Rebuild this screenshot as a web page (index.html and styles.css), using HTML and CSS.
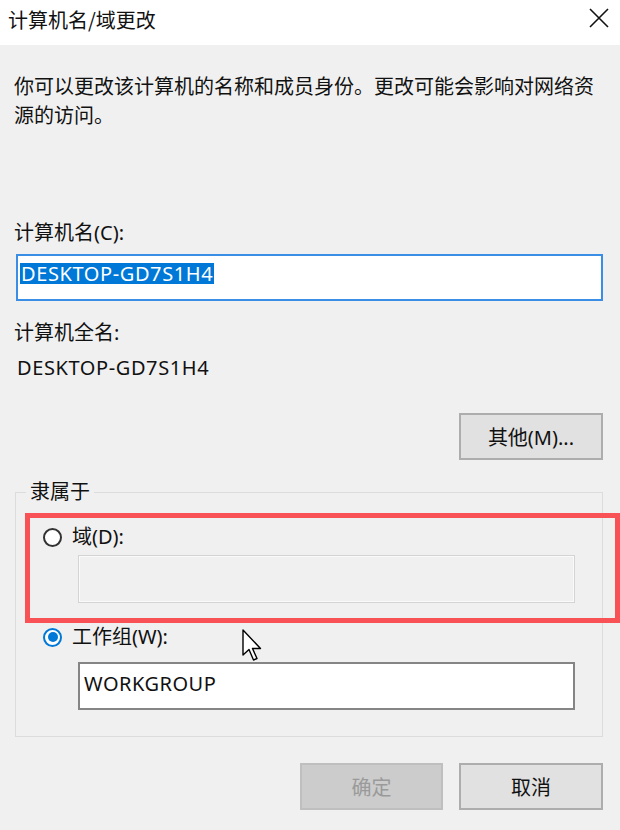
FILE: index.html
```html
<!DOCTYPE html>
<html lang="zh-CN">
<head>
  <meta charset="UTF-8">
  <title>计算机名/域更改</title>
  <link rel="stylesheet" href="styles.css">
</head>
<body>
  <div class="window">
    <!-- 标题栏 -->
    <div class="titlebar">
      <span class="title">计算机名/域更改</span>
      <svg class="close" width="20" height="20" viewBox="0 0 20 20">
        <path d="M1 1 L19 19 M19 1 L1 19" stroke="#111" stroke-width="1.6" fill="none"/>
      </svg>
    </div>

    <div class="content">
      <p class="desc">你可以更改该计算机的名称和成员身份。更改可能会影响对网络资源的访问。</p>

      <div class="field-label name-label">计算机名(C):</div>
      <div class="textbox focused"><span class="sel">DESKTOP-GD7S1H4</span></div>

      <div class="field-label full-label">计算机全名:</div>
      <div class="value">DESKTOP-GD7S1H4</div>

      <div class="row-right">
        <button class="btn">其他(M)...</button>
      </div>

      <fieldset class="group">
        <legend>隶属于</legend>
        <div class="option domain-opt"><span class="radio"></span>域(D):</div>
        <div class="textbox inset disabled"></div>
        <div class="option wg-opt"><span class="radio checked"></span>工作组(W):</div>
        <div class="textbox inset wg">WORKGROUP</div>
      </fieldset>

      <div class="actions">
        <button class="btn" disabled>确定</button>
        <button class="btn">取消</button>
      </div>
    </div>

    <!-- 红框标注 -->
    <div class="mark"></div>

    <!-- 鼠标指针 -->
    <svg class="cursor" width="22" height="34" viewBox="0 0 22 34">
      <path d="M1 1 L1 26 L7 20.5 L11.5 31 L15 29.5 L10.5 19.5 L18.5 19.5 Z" fill="#fff" stroke="#000" stroke-width="1.4" stroke-linejoin="round"/>
    </svg>
  </div>
</body>
</html>
```

FILE: styles.css
```css
* {
  box-sizing: border-box;
}
body {
  margin: 0;
  background: #f0f0f0;
  font-family: "Noto Sans", "Noto Sans CJK SC", sans-serif;
  font-size: 20px;
  color: #111;
}
.window {
  position: relative;
  width: 620px;
  height: 830px;
  overflow: hidden;
  background: #f0f0f0;
}

/* 标题栏 */
.titlebar {
  height: 45px;
  background: #fff;
  display: flex;
  justify-content: space-between;
  align-items: flex-start;
  padding: 6px 11px 0 8px;
}
.title {
  line-height: 28px;
  font-family: "Noto Sans CJK SC", sans-serif;
}
.close {
  margin-top: 2px;
}

.content {
  padding: 27px 17px 0 16px;
}
.desc {
  margin: 0 0 0 -2px;
  line-height: 29px;
}
.field-label {
  line-height: 28px;
}
.name-label {
  margin-top: 89px;
  margin-left: -2px;
}
.full-label {
  margin-top: 18px;
  margin-left: -2px;
}
.value {
  margin-top: 7px;
  line-height: 28px;
  padding-left: 1px;
  letter-spacing: 0.6px;
}

/* 输入框 */
.textbox {
  height: 47px;
  background: #fff;
  border: 1px solid #7a7a7a;
}
.textbox.focused {
  margin-top: 7px;
  border: 2px solid #3a8ee6;
  padding: 4px 0 0 2px;
}
.sel {
  display: inline-block;
  line-height: 21px;
  background: #0078d7;
  color: #fff;
  padding: 0 1px;
  letter-spacing: 0.6px;
}
.textbox.inset {
  width: 497px;
  height: 48px;
  margin-left: 62px;
}
.textbox.disabled {
  margin-top: 4px;
  background: #f0f0f0;
  border: 1px solid #d4d4d4;
  box-shadow: inset 0 0 0 1px #fafafa;
}
.textbox.wg {
  margin-top: 11px;
  border: 2px solid #858585;
  padding: 6px 0 0 4px;
  line-height: 28px;
  letter-spacing: 0.5px;
}

/* 按钮 */
.row-right {
  display: flex;
  justify-content: flex-end;
  margin-top: 31px;
}
.btn {
  width: 144px;
  height: 47px;
  background: #e1e1e1;
  border: 2px solid #adadad;
  font-family: "Noto Sans", "Noto Sans CJK SC", sans-serif;
  font-size: 20px;
  color: #111;
  padding: 0;
}
.btn:disabled {
  width: 143px;
  background: #cccccc;
  border-color: #bfbfbf;
  color: #9a9a9a;
}
.actions {
  display: flex;
  justify-content: flex-end;
  gap: 16px;
  margin-top: 26px;
}

/* 分组框 */
.group {
  margin: 18px 0 0 -1px;
  padding: 0 0 26px 0;
  border: 1px solid #dcdcdc;
  min-width: 0;
}
.group legend {
  margin-left: 10px;
  padding: 0 4px;
  line-height: 28px;
}
.option {
  display: flex;
  align-items: center;
  line-height: 28px;
  margin-left: 27px;
}
.domain-opt {
  margin-top: 17px;
}
.wg-opt {
  margin-top: 20px;
}
.radio {
  flex: none;
  width: 19px;
  height: 19px;
  border: 2px solid #333;
  border-radius: 50%;
  background: #fff;
  margin-right: 10px;
  position: relative;
}
.radio.checked {
  border-color: #0078d7;
}
.radio.checked:before {
  content: "";
  position: absolute;
  left: 2.5px;
  top: 2.5px;
  width: 10px;
  height: 10px;
  border-radius: 50%;
  background: #0078d7;
}

/* 标注与指针 */
.mark {
  position: absolute;
  left: 25px;
  top: 513px;
  width: 595px;
  height: 110px;
  border: 5px solid #f85257;
}
.cursor {
  position: absolute;
  left: 242px;
  top: 629px;
}
```
